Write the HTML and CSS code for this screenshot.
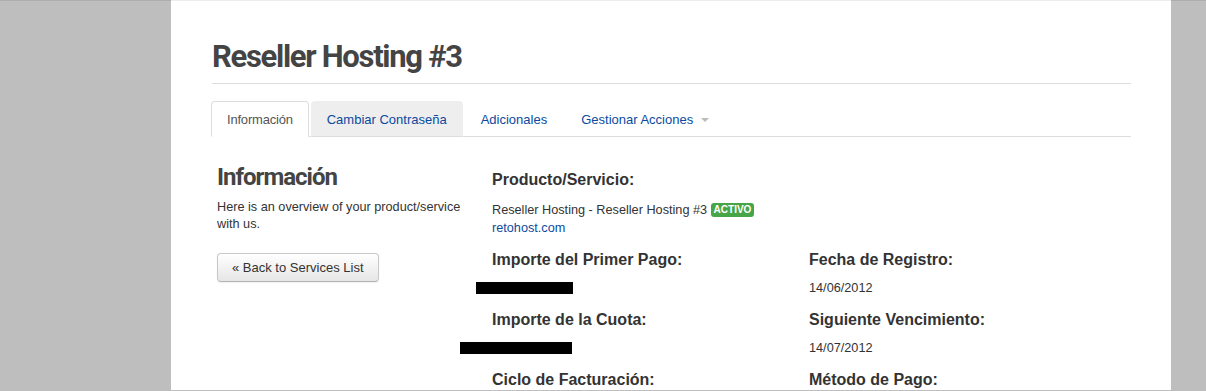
FILE: index.html
```html
<!DOCTYPE html>
<html lang="es">
<head>
    <meta charset="UTF-8">
    <meta name="viewport" content="width=device-width, initial-scale=1.0">
    <title>Reseller Hosting #3</title>
    <link rel="stylesheet" href="styles.css">
</head>
<body>
    <div class="page">
        <div class="panel">
            <h1 class="page-title">Reseller Hosting #3</h1>

            <ul class="tabs">
                <li class="tab active"><a href="#">Información</a></li>
                <li class="tab hover"><a href="#">Cambiar Contraseña</a></li>
                <li class="tab"><a href="#">Adicionales</a></li>
                <li class="tab"><a href="#">Gestionar Acciones <span class="caret"></span></a></li>
            </ul>

            <div class="content">
                <div class="sidebar">
                    <h2>Información</h2>
                    <p>Here is an overview of your product/service with us.</p>
                    <button class="btn">&laquo; Back to Services List</button>
                </div>

                <div class="details">
                    <div class="item product">
                        <h4>Producto/Servicio:</h4>
                        <p>Reseller Hosting - Reseller Hosting #3 <span class="badge">ACTIVO</span><br>
                        <a href="#">retohost.com</a></p>
                    </div>
                    <div class="item"></div>

                    <div class="item">
                        <h4>Importe del Primer Pago:</h4>
                        <p><span class="redacted first"></span></p>
                    </div>
                    <div class="item">
                        <h4>Fecha de Registro:</h4>
                        <p>14/06/2012</p>
                    </div>

                    <div class="item">
                        <h4>Importe de la Cuota:</h4>
                        <p><span class="redacted second"></span></p>
                    </div>
                    <div class="item">
                        <h4>Siguiente Vencimiento:</h4>
                        <p>14/07/2012</p>
                    </div>

                    <div class="item">
                        <h4>Ciclo de Facturación:</h4>
                    </div>
                    <div class="item">
                        <h4>Método de Pago:</h4>
                    </div>
                </div>
            </div>
        </div>
    </div>
</body>
</html>
```

FILE: styles.css
```css
/* Basic reset */
* {
    margin: 0;
    padding: 0;
    box-sizing: border-box;
}

body {
    font-family: "Liberation Sans", Arial, sans-serif;
    background-color: #bebebe;
    color: #333;
    height: 391px;
    overflow: hidden;
}

.page {
    border-top: 1px solid #adadad;
    height: 100%;
}

/* White content panel */
.panel {
    margin-left: 171px;
    width: 1000px;
    height: 100%;
    background-color: #fff;
    border-top: 1px solid #ececec;
    margin-top: -1px;
    padding: 0 40px 0 41px;
}

.page-title {
    font-family: Roboto, "Open Sans", sans-serif;
    font-weight: 700;
    font-size: 31px;
    letter-spacing: -1.3px;
    line-height: 40px;
    color: #444;
    padding: 36px 0 6px;
    border-bottom: 1px solid #ddd;
}

/* Tabs */
.tabs {
    list-style: none;
    display: flex;
    margin-top: 17px;
    margin-left: -1px;
    border-bottom: 1px solid #ddd;
}

.tab {
    margin-right: 2px;
    margin-bottom: -1px;
}

.tab a {
    display: block;
    font-size: 13px;
    line-height: 17px;
    padding: 9px 15px 8px;
    color: #0b4a9f;
    text-decoration: none;
    border: 1px solid transparent;
    border-radius: 4px 4px 0 0;
}

.tab.hover a {
    background-color: #eee;
    border-color: #eee #eee #ddd;
}

.tab.active a {
    color: #555;
    background-color: #fff;
    border-color: #ddd #ddd transparent;
    letter-spacing: -0.2px;
}

.caret {
    display: inline-block;
    width: 0;
    height: 0;
    margin-left: 4px;
    vertical-align: 2px;
    border-top: 4px solid #bbb;
    border-left: 4px solid transparent;
    border-right: 4px solid transparent;
}

/* Main content */
.content {
    display: grid;
    grid-template-columns: 280px 1fr;
    align-items: start;
}

.sidebar {
    padding: 25px 20px 0 5px;
}

.sidebar h2 {
    font-family: Roboto, "Open Sans", sans-serif;
    font-weight: 700;
    font-size: 24px;
    letter-spacing: -1px;
    line-height: 30px;
    color: #444;
    margin-bottom: 7px;
}

.sidebar p {
    font-size: 12.7px;
    line-height: 17px;
    color: #333;
    margin-bottom: 20px;
}

.btn {
    font-family: "Liberation Sans", Arial, sans-serif;
    font-size: 13px;
    line-height: 17px;
    color: #333;
    padding: 5px 14px;
    border: 1px solid #c8c8c8;
    border-bottom-color: #b3b3b3;
    border-radius: 4px;
    background: linear-gradient(#ffffff, #e6e6e6);
    box-shadow: 0 1px 2px rgba(0, 0, 0, 0.06);
    cursor: pointer;
}

.details {
    display: grid;
    grid-template-columns: 317px 1fr;
    padding-top: 33px;
}

.item h4 {
    font-size: 16px;
    line-height: 20px;
    color: #333;
    margin-bottom: 9px;
}

.item p {
    font-size: 12.7px;
    line-height: 18px;
    color: #333;
    margin-bottom: 13px;
}

.item.product h4 {
    margin-bottom: 11px;
}

.item.product p {
    margin-bottom: 13px;
}

.item a {
    color: #0b4a9f;
    text-decoration: none;
}

.badge {
    display: inline-block;
    font-size: 10px;
    font-weight: 700;
    line-height: 14px;
    color: #fff;
    background-color: #46a546;
    padding: 0 3px;
    border-radius: 3px;
    vertical-align: 1px;
}

/* black boxes hiding the amounts */
.redacted {
    display: inline-block;
    height: 12px;
    background-color: #000;
    vertical-align: -2px;
}

.redacted.first {
    width: 97px;
    margin-left: -16px;
}

.redacted.second {
    width: 112px;
    margin-left: -32px;
}
```
